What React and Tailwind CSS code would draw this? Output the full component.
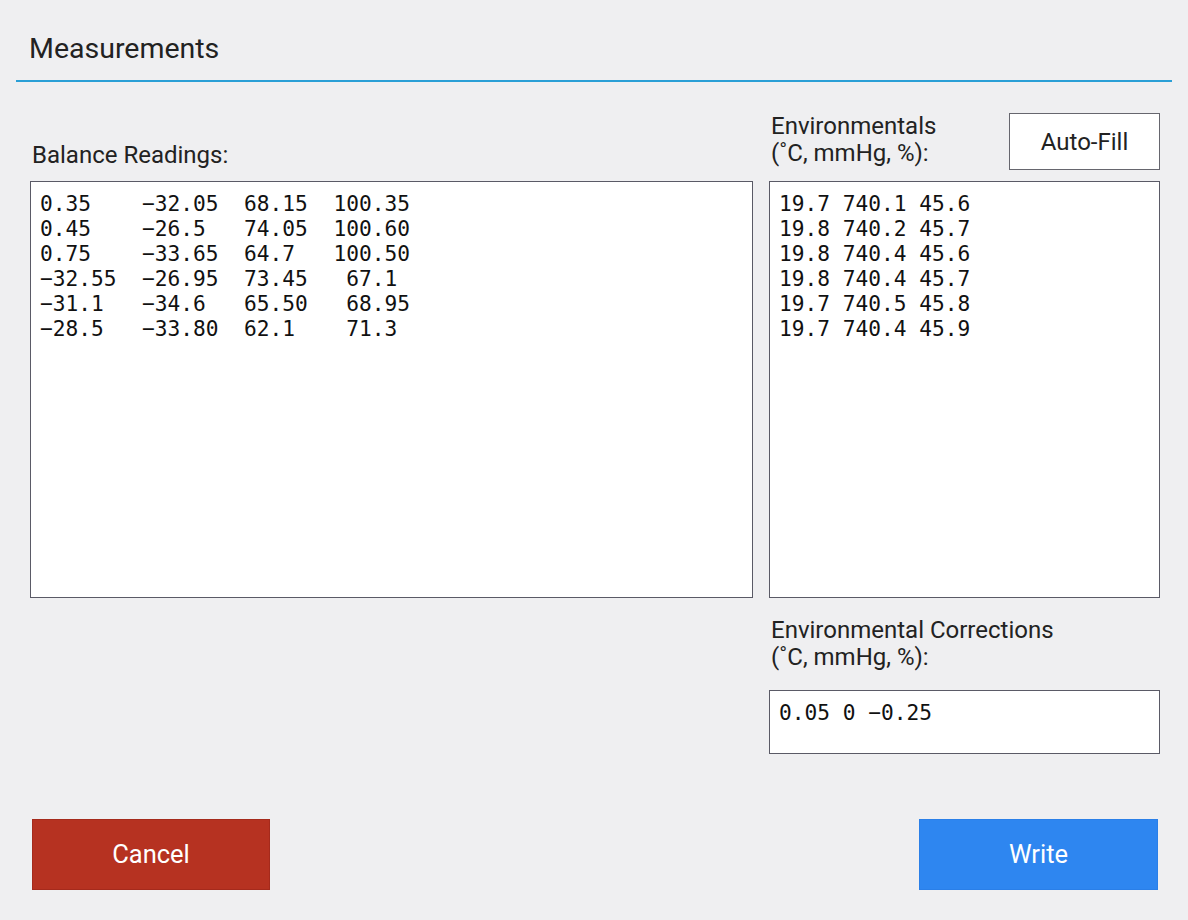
import React from "react";

const mono = { fontFamily: '"DejaVu Sans Mono", monospace' };

const balance = [
  "0.35    −32.05  68.15  100.35",
  "0.45    −26.5   74.05  100.60",
  "0.75    −33.65  64.7   100.50",
  "−32.55  −26.95  73.45   67.1",
  "−31.1   −34.6   65.50   68.95",
  "−28.5   −33.80  62.1    71.3",
];

const env = [
  "19.7 740.1 45.6",
  "19.8 740.2 45.7",
  "19.8 740.4 45.6",
  "19.8 740.4 45.7",
  "19.7 740.5 45.8",
  "19.7 740.4 45.9",
];

export default function App() {
  return (
    <div
      className="w-[1188px] h-[920px] bg-[#efeff1] text-[#222] overflow-hidden"
      style={{ fontFamily: 'Roboto, "Liberation Sans", sans-serif' }}
    >
      <div className="px-[16px]">
        <div className="h-[82px] border-b-2 border-[#2a9fd6] pl-[13px] pt-[32px]">
          <div className="text-[28.5px] leading-[34px]">Measurements</div>
        </div>
      </div>

      <div className="pl-[30px] pt-[31px] grid grid-cols-[723px_391px] gap-x-[16px]">
        <div className="flex flex-col">
          <div className="h-[57px] flex items-end pl-[2px] pb-[1px]">
            <div className="text-[24px] leading-[27px]">Balance Readings:</div>
          </div>
          <div
            className="mt-[11px] h-[417px] bg-white border border-[#5a5a66] px-[9px] pt-[9px] text-[21.2px] leading-[25px] whitespace-pre text-[#111]"
            style={mono}
          >
            {balance.map((l, i) => (
              <div key={i}>{l}</div>
            ))}
          </div>
        </div>

        <div className="flex flex-col">
          <div className="h-[57px] flex items-start justify-between">
            <div className="pl-[2px] text-[24px] leading-[27px]">
              <div>Environmentals</div>
              <div>(˚C, mmHg, %):</div>
            </div>
            <button className="w-[151px] h-[57px] bg-white border border-[#66666e] text-[24px] text-[#222]">
              Auto-Fill
            </button>
          </div>
          <div
            className="mt-[11px] h-[417px] bg-white border border-[#5a5a66] px-[9px] pt-[9px] text-[21.2px] leading-[25px] whitespace-pre text-[#111]"
            style={mono}
          >
            {env.map((l, i) => (
              <div key={i}>{l}</div>
            ))}
          </div>

          <div className="mt-[19px] pl-[2px] text-[24px] leading-[27px]">
            <div>Environmental Corrections</div>
            <div>(˚C, mmHg, %):</div>
          </div>
          <div
            className="mt-[19px] h-[64px] bg-white border border-[#5a5a66] px-[9px] pt-[9px] text-[21.2px] leading-[25px] whitespace-pre text-[#111]"
            style={mono}
          >
            0.05 0 −0.25
          </div>
        </div>
      </div>

      <div className="mt-[65px] pl-[32px] pr-[30px] flex justify-between">
        <button className="w-[238px] h-[71px] bg-[#b63221] border border-[#a52a1c] text-white text-[25.5px]">
          Cancel
        </button>
        <button className="w-[239px] h-[71px] bg-[#2e86f0] border border-[#2a7fe8] text-white text-[25.5px]">
          Write
        </button>
      </div>
    </div>
  );
}
